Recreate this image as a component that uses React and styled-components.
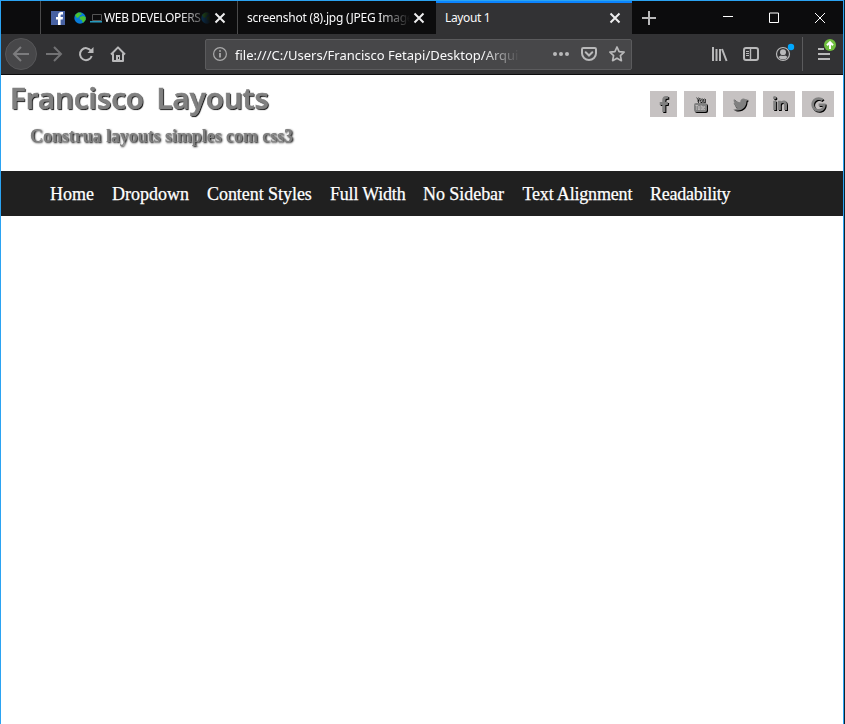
import React from 'react';
import styled, { createGlobalStyle } from 'styled-components';
import { FaFacebookF, FaTwitter, FaLinkedinIn, FaGoogle } from 'react-icons/fa';

const GlobalStyle = createGlobalStyle`
  *, *::before, *::after { box-sizing: border-box; }
  body { margin: 0; background: #fff; }
`;

const BrowserWindow = styled.div`
  width: 844px;
  height: 724px;
  overflow: hidden;
  display: flex;
  flex-direction: column;
  border: solid #2ba3f2;
  border-width: 1px 1px 0 1px;
  background: #fff;
  box-shadow: 1px 0 0 #10222e;
`;

const TitleBar = styled.div`
  height: 33px;
  flex: none;
  display: flex;
  background: #0c0c0d;
  color: #f9f9fa;
  font: 12px 'Noto Sans', sans-serif;
`;

const TabSpacer = styled.div`
  width: 39px;
`;

const Tab = styled.div`
  width: ${p => p.$width}px;
  height: 33px;
  display: flex;
  align-items: center;
  padding: 1px 12px 0 ${p => p.$inset}px;
  border-left: ${p => (p.$active ? 'none' : '1px solid #4a4a4b')};
  background: ${p => (p.$active ? '#323234' : '#0c0c0d')};
  box-shadow: ${p => (p.$active ? 'inset 0 2px #0a84ff' : 'none')};
`;

const TabTitle = styled.span`
  flex: 1;
  min-width: 0;
  display: flex;
  align-items: center;
  overflow: hidden;
  white-space: nowrap;
  line-height: 20px;
  letter-spacing: ${p => p.$spacing || 0}px;
  mask-image: ${p => (p.$fade ? 'linear-gradient(to left, transparent, #000 32px)' : 'none')};
`;

const Glyph = styled.svg`
  display: block;
  flex: none;
  overflow: visible;
  fill: none;
  stroke: ${p => p.$color || '#b9b9ba'};
  stroke-width: ${p => p.$weight || 2};
  margin-left: ${p => p.$before || 0}px;
  margin-right: ${p => p.$after || 0}px;
`;

const NewTab = styled.div`
  width: 34px;
  display: grid;
  place-items: center;
`;

const WindowControls = styled.div`
  margin-left: auto;
  display: flex;
`;

const WindowButton = styled.div`
  width: 46px;
  height: 33px;
  display: grid;
  place-items: center;
`;

const Toolbar = styled.div`
  height: 41px;
  flex: none;
  display: flex;
  align-items: center;
  background: #323234;
  border-bottom: 1px solid #0c0c0d;
  padding-left: 4px;
`;

const BackButton = styled.div`
  width: 32px;
  height: 32px;
  margin-right: 1px;
  display: grid;
  place-items: center;
  border: 1px solid #565658;
  border-radius: 50%;
  background: #474749;
`;

const ToolButton = styled.div`
  width: 32px;
  height: 32px;
  display: grid;
  place-items: center;
`;

const AddressBar = styled.div`
  width: 427px;
  height: 31px;
  margin-left: 71px;
  display: flex;
  align-items: center;
  border: 1px solid #5b5b5d;
  border-radius: 2px;
  background: #474749;
  padding: 0 6px 0 7px;
`;

const Address = styled.span`
  width: 285px;
  margin-left: 8px;
  overflow: hidden;
  white-space: nowrap;
  color: #f9f9fa;
  font: 13px/22px 'Noto Sans', sans-serif;
  padding-top: 1px;
  mask-image: linear-gradient(to left, transparent, #000 38px);
`;

const AddressActions = styled.div`
  margin-left: auto;
  display: flex;
  gap: 12px;
`;

const ToolbarEnd = styled.div`
  margin-left: auto;
  display: flex;
  align-items: center;
`;

const Divider = styled.div`
  width: 1px;
  height: 34px;
  margin-left: 3px;
  background: #5b5b5d;
`;

const MenuButton = styled.div`
  width: 40px;
  height: 32px;
  display: grid;
  place-items: center;
`;

const PageHeader = styled.header`
  height: 96px;
  flex: none;
  display: flex;
  justify-content: space-between;
  padding: 5px 9px 0 9px;
`;

const Branding = styled.div`
  will-change: transform;
`;

const SiteTitle = styled.h1`
  margin: 0;
  height: 40px;
  white-space: nowrap;
  color: #808080;
  font: 600 29.5px/36px 'Noto Sans', sans-serif;
  letter-spacing: -0.1px;
  word-spacing: 5px;
  -webkit-text-stroke: 0.6px #808080;
  text-shadow: 1px 1px 1px #000;
`;

const Tagline = styled.h2`
  margin: 0;
  padding-left: 20px;
  white-space: nowrap;
  color: #808080;
  font: bold 18px/33px 'Liberation Serif', serif;
  letter-spacing: -0.06px;
  text-shadow: 1px 1px 2px #000;
`;

const SocialLinks = styled.div`
  display: flex;
  gap: 7px;
  margin-top: 11px;
`;

const SocialLink = styled.a`
  width: ${p => p.$width}px;
  height: 26px;
  display: grid;
  place-items: center;
  padding-left: 1px;
  background: #c6c2c2;
  color: #808080;

  svg { filter: drop-shadow(1px 1px 0.5px #000); }
`;

const NavBar = styled.nav`
  height: 45px;
  flex: none;
  display: flex;
  align-items: center;
  gap: 18px;
  padding: 1px 0 0 49px;
  background: #202020;
`;

const NavLink = styled.a`
  width: ${p => p.$width}px;
  white-space: nowrap;
  color: #fff;
  font: 18px/22px 'Liberation Serif', serif;
  letter-spacing: ${p => p.$spacing}px;
  -webkit-text-stroke: 0.25px #fff;
`;

const CloseIcon = () => (
  <Glyph width="10" height="10" viewBox="0 0 10 10" $color="#eeeeef" $before={4}>
    <path d="M.5.5l9 9m0-9l-9 9" />
  </Glyph>
);

const FacebookFavicon = () => (
  <Glyph width="14" height="14" viewBox="0 0 14 14" $after={9}>
    <path fill="#4862a3" stroke="none" d="M0 0h14v14H0z" />
    <path fill="#fff" stroke="none" d="M7 14V8.5H5V6h2V4.5C7 2.3 8.2 1 10.3 1H12v2.5h-1.2c-1 0-1.2.5-1.2 1.2V6H12l-.3 2.5H9.6V14z" />
  </Glyph>
);

const GlobeEmoji = () => (
  <Glyph width="12" height="12" viewBox="0 0 12 12">
    <circle cx="6" cy="6" r="5.7" fill="#087bd8" stroke="none" />
    <path fill="#48c332" stroke="none" d="M1 3l3-2.6L7 .8l1 1.4-2 .8L5 5 3 6zM6 5l3-1 2.7 1v3L9 11 7.6 8 5.5 7z" />
  </Glyph>
);

const LaptopEmoji = () => (
  <Glyph width="13" height="9" viewBox="0 0 13 9" $after={1} $before={4}>
    <path fill="#0c0c0d" stroke="#555" strokeWidth="1" d="M2.5.5h9v6h-9z" />
    <path stroke="#2cb4dd" strokeWidth="1.3" d="M0 7.8h12" />
  </Glyph>
);

const YoutubeStacked = () => (
  <svg width="16" height="18" viewBox="0 0 16 18">
    <text x="7.5" y="7" textAnchor="middle" textLength="9" lengthAdjust="spacingAndGlyphs" fill="#707070" fontFamily="Liberation Sans, sans-serif" fontWeight="bold" fontSize="8">You</text>
    <rect x="1" y="8" width="13" height="9" rx="2" fill="#808080" />
    <text x="7.5" y="15" textAnchor="middle" textLength="10" lengthAdjust="spacingAndGlyphs" fill="#c6c2c2" fontFamily="Liberation Sans, sans-serif" fontWeight="bold" fontSize="6.5">Tube</text>
  </svg>
);

const links = [
  { label: 'Home', width: 44, spacing: 0 },
  { label: 'Dropdown', width: 77, spacing: 0 },
  { label: 'Content Styles', width: 105, spacing: -0.05 },
  { label: 'Full Width', width: 75, spacing: -0.2 },
  { label: 'No Sidebar', width: 81.5, spacing: -0.05 },
  { label: 'Text Alignment', width: 109.5, spacing: -0.18 },
  { label: 'Readability', width: 80, spacing: -0.25 },
];

export default function App() {
  return (
    <BrowserWindow>
      <GlobalStyle />
      <TitleBar>
        <TabSpacer />
        <Tab $width={197} $inset={10}>
          <FacebookFavicon />
          <TabTitle $fade $spacing={-0.35}>
            <GlobeEmoji /><LaptopEmoji />WEB DEVELOPERS<GlobeEmoji />
          </TabTitle>
          <CloseIcon />
        </Tab>
        <Tab $width={199} $inset={9}>
          <TabTitle $fade $spacing={-0.23}>screenshot (8).jpg (JPEG Image</TabTitle>
          <CloseIcon />
        </Tab>
        <Tab $width={196} $inset={9} $active>
          <TabTitle $spacing={-0.35}>Layout 1</TabTitle>
          <CloseIcon />
        </Tab>
        <NewTab>
          <Glyph width="14" height="14" viewBox="0 0 14 14"><path d="M7 0v14M0 7h14" /></Glyph>
        </NewTab>
        <WindowControls>
          <WindowButton>
            <Glyph width="10" height="10" viewBox="0 0 10 10" $color="#fff" $weight={1}><path d="M0 3.5h10" /></Glyph>
          </WindowButton>
          <WindowButton>
            <Glyph width="10" height="10" viewBox="0 0 10 10" $color="#fff" $weight={1}><path d="M.5 0v9.5h9V0h-9" /></Glyph>
          </WindowButton>
          <WindowButton>
            <Glyph width="10" height="10" viewBox="0 0 10 10" $color="#fff" $weight={1}><path d="M0 0l10 10M10 0L0 10" /></Glyph>
          </WindowButton>
        </WindowControls>
      </TitleBar>

      <Toolbar>
        <BackButton>
          <Glyph width="16" height="16" viewBox="0 0 16 16" $color="#7c7c7e"><path d="M16 8H1m7-7L1 8l7 7" /></Glyph>
        </BackButton>
        <ToolButton>
          <Glyph width="16" height="16" viewBox="0 0 16 16" $color="#727274"><path d="M0 8h15M8 1l7 7-7 7" /></Glyph>
        </ToolButton>
        <ToolButton>
          <Glyph width="16" height="16" viewBox="0 0 16 16">
            <path d="M13 4.8A6 6 0 1 0 13.7 10" />
            <path fill="#b9b9ba" stroke="none" d="M15.5 1v6h-6z" />
          </Glyph>
        </ToolButton>
        <ToolButton>
          <Glyph width="16" height="16" viewBox="0 0 16 16">
            <path d="M1 8.5L8 1.4l7 7.1M3 7.5V15h10V7.5" strokeLinejoin="round" />
            <path fill="#b9b9ba" stroke="none" d="M6 9h4v6H6z" />
            <path fill="#323234" stroke="none" d="M8 11h1v2H8z" />
          </Glyph>
        </ToolButton>
        <AddressBar>
          <Glyph width="14" height="14" viewBox="0 0 14 14" $weight={1.2} $color="#a9a9aa">
            <circle cx="7" cy="7" r="6.4" />
            <path d="M7 6v4.5M7 3.3v1.5" strokeWidth="1.8" />
          </Glyph>
          <Address>file:///C:/Users/Francisco Fetapi/Desktop/Arqui</Address>
          <AddressActions>
            <Glyph width="16" height="16" viewBox="0 0 16 16">
              <g fill="#b9b9ba" stroke="none"><circle cx="2" cy="8" r="2" /><circle cx="8" cy="8" r="2" /><circle cx="14" cy="8" r="2" /></g>
            </Glyph>
            <Glyph width="16" height="16" viewBox="0 0 16 16">
              <path d="M2.3 2h11.4q1.3 0 1.3 1.3v4A7 6.7 0 0 1 1 7.3v-4Q1 2 2.3 2zM4.7 6.3L8 9.5l3.3-3.2" strokeLinecap="round" />
            </Glyph>
            <Glyph width="16" height="16" viewBox="0 0 16 16" $weight={1.7}>
              <path strokeLinejoin="round" d="M8 1l2.1 4.6 5 .6-3.7 3.4 1 5.1L8 12.2l-4.4 2.5 1-5.1L.9 6.2l5-.6z" />
            </Glyph>
          </AddressActions>
        </AddressBar>
        <ToolbarEnd>
          <ToolButton>
            <Glyph width="16" height="16" viewBox="0 0 16 16"><path d="M2 1v14M5.5 3v12M9 3v12M11 3l4.6 12" /></Glyph>
          </ToolButton>
          <ToolButton>
            <Glyph width="16" height="16" viewBox="0 0 16 16">
              <rect x="1" y="2" width="14" height="12" rx="2" /><path d="M7.5 2v12" strokeWidth="1.4" /><path d="M3 5.5h3M3 7.5h3M3 9.5h3" strokeWidth="1" />
            </Glyph>
          </ToolButton>
          <ToolButton>
            <Glyph width="16" height="16" viewBox="0 0 16 16">
              <circle cx="8" cy="8" r="6.5" strokeWidth="1.2" />
              <g fill="#b9b9ba" stroke="none"><circle cx="8" cy="6.2" r="3" /><path d="M3.5 11Q5 9.7 6 9.5q2 1 4 0 1 .2 2.5 1.5Q11 13.5 8 13.5T3.5 11z" /></g>
              <circle cx="16" cy="1" r="3.2" fill="#00a8ff" stroke="none" />
            </Glyph>
          </ToolButton>
          <Divider />
          <MenuButton>
            <Glyph width="16" height="16" viewBox="0 0 16 16" $before={3}>
              <path d="M1 3h6M1 8h12M1 13h12" />
              <circle cx="13" cy="-1" r="6" fill="#70bf3e" stroke="none" />
              <path d="M13 3v-6M10 -.8l3-3 3 3" stroke="#fff" />
            </Glyph>
          </MenuButton>
        </ToolbarEnd>
      </Toolbar>

      <PageHeader>
        <Branding>
          <SiteTitle>Francisco Layouts</SiteTitle>
          <Tagline>Construa layouts simples com css3</Tagline>
        </Branding>
        <SocialLinks>
          <SocialLink $width={27}><FaFacebookF size={16} /></SocialLink>
          <SocialLink $width={32}><YoutubeStacked /></SocialLink>
          <SocialLink $width={33}><FaTwitter size={15} /></SocialLink>
          <SocialLink $width={32}><FaLinkedinIn size={16} /></SocialLink>
          <SocialLink $width={32}><FaGoogle size={15} /></SocialLink>
        </SocialLinks>
      </PageHeader>
      <NavBar>
        {links.map(({ label, width, spacing }) => (
          <NavLink key={label} $width={width} $spacing={spacing}>{label}</NavLink>
        ))}
      </NavBar>
    </BrowserWindow>
  );
}
